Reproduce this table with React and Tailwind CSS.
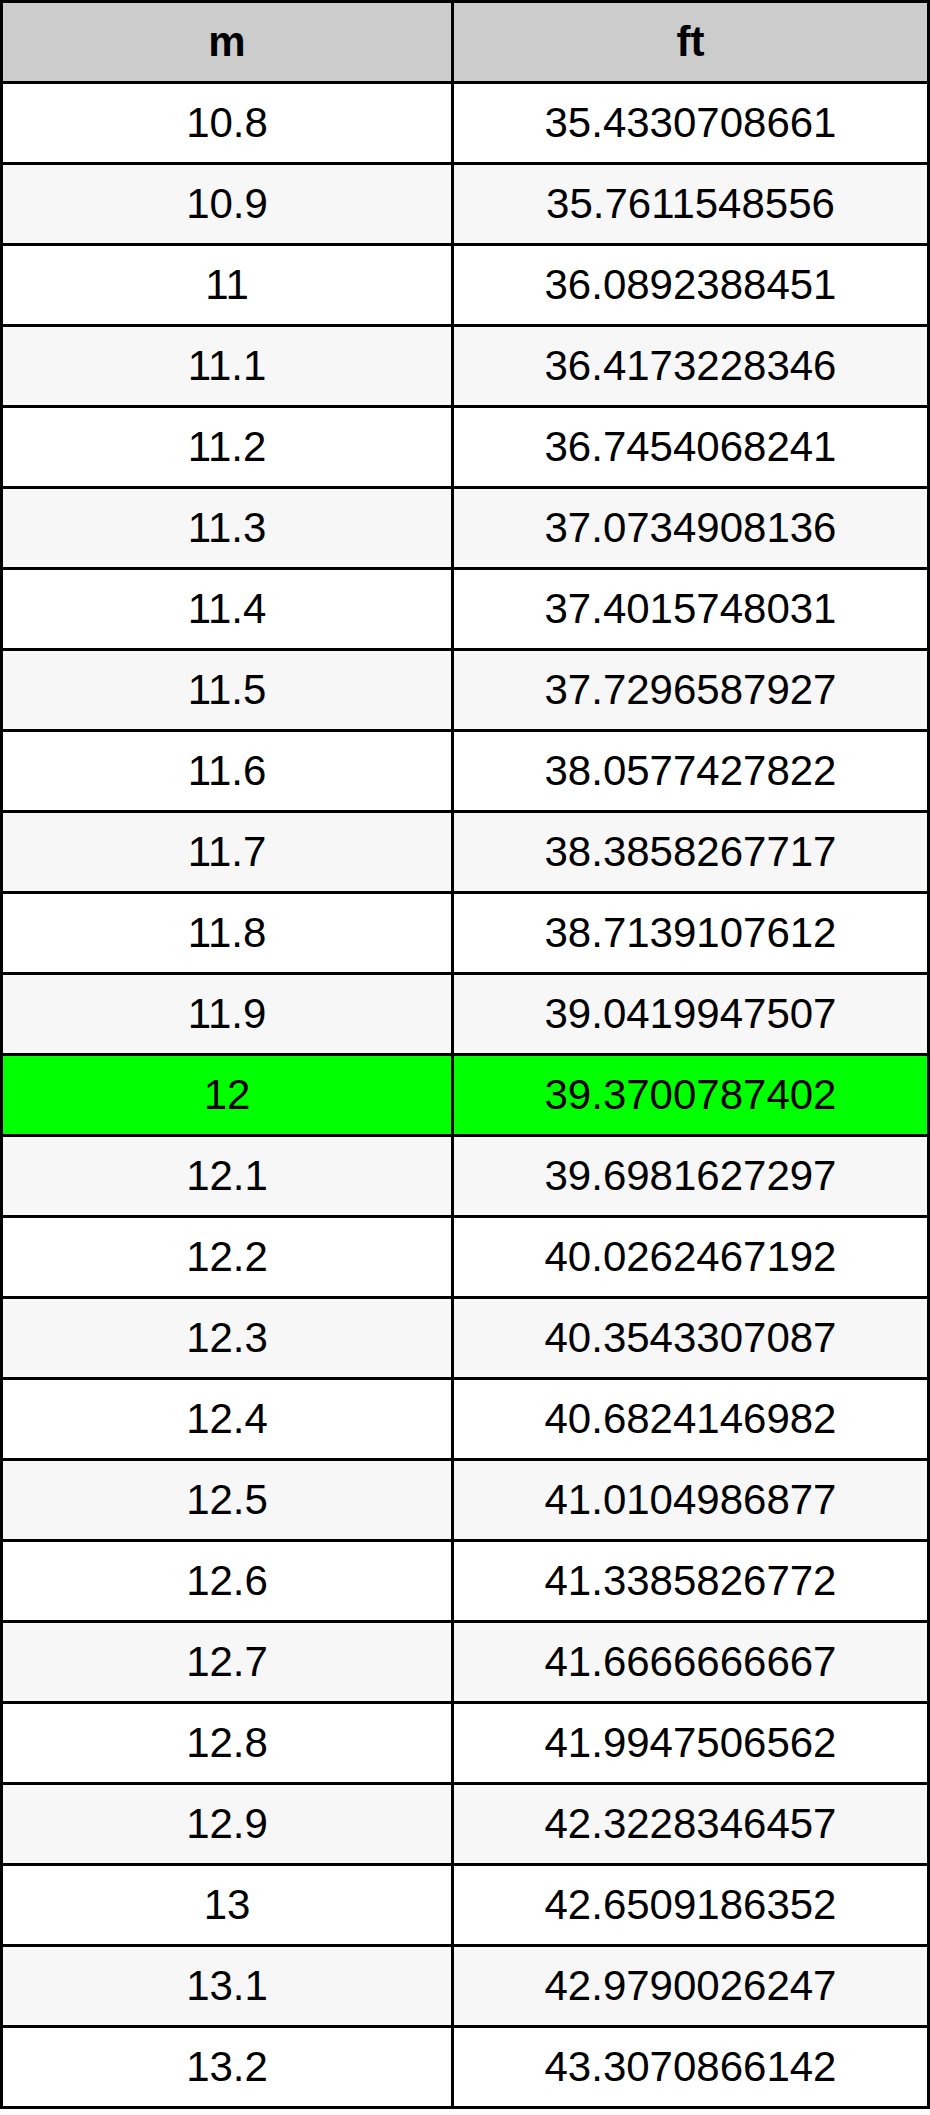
import React from "react";

const rows = [
  ["10.8", "35.4330708661"],
  ["10.9", "35.7611548556"],
  ["11", "36.0892388451"],
  ["11.1", "36.4173228346"],
  ["11.2", "36.7454068241"],
  ["11.3", "37.0734908136"],
  ["11.4", "37.4015748031"],
  ["11.5", "37.7296587927"],
  ["11.6", "38.0577427822"],
  ["11.7", "38.3858267717"],
  ["11.8", "38.7139107612"],
  ["11.9", "39.0419947507"],
  ["12", "39.3700787402"],
  ["12.1", "39.6981627297"],
  ["12.2", "40.0262467192"],
  ["12.3", "40.3543307087"],
  ["12.4", "40.6824146982"],
  ["12.5", "41.0104986877"],
  ["12.6", "41.3385826772"],
  ["12.7", "41.6666666667"],
  ["12.8", "41.9947506562"],
  ["12.9", "42.3228346457"],
  ["13", "42.6509186352"],
  ["13.1", "42.9790026247"],
  ["13.2", "43.3070866142"],
];

function Row({ a, b, bg, bold }) {
  const text = bold ? "font-bold" : "font-normal";
  return (
    <div className={`flex ${bg}`}>
      <div className={`w-[451px] h-[81px] border-r-[3px] border-b-[3px] border-black flex items-center justify-center ${text}`}>
        {a}
      </div>
      <div className={`w-[476px] h-[81px] border-r-[3px] border-b-[3px] border-black flex items-center justify-center ${text}`}>
        {b}
      </div>
    </div>
  );
}

export default function App() {
  return (
    <div
      className="w-[930px] bg-white text-black text-[42px] leading-none"
      style={{ fontFamily: '"Liberation Sans", Arial, sans-serif' }}
    >
      <div className="border-l-[3px] border-t-[3px] border-black">
        <Row a="m" b="ft" bg="bg-[#cccccc]" bold />
        {rows.map(([a, b], i) => {
          let bg = i % 2 === 0 ? "bg-white" : "bg-[#f7f7f7]";
          if (a === "12") bg = "bg-[#00ff00]";
          return <Row key={a} a={a} b={b} bg={bg} />;
        })}
      </div>
    </div>
  );
}
